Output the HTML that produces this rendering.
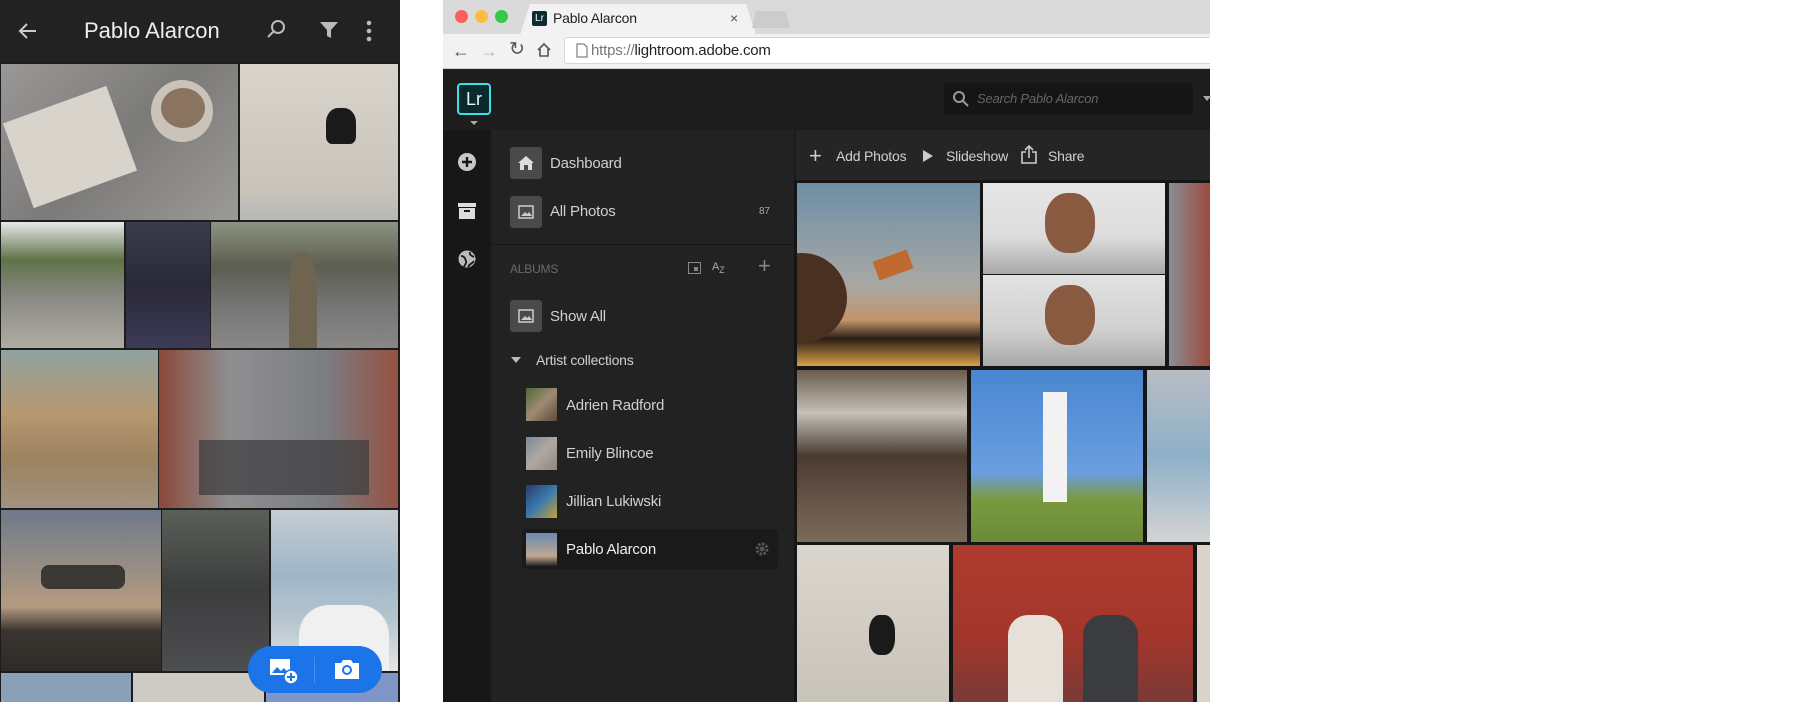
<!DOCTYPE html>
<html><head><meta charset="utf-8"><style>
*{margin:0;padding:0;box-sizing:border-box}
body{width:1800px;height:702px;background:#fff;position:relative;overflow:hidden;font-family:"Liberation Sans",sans-serif}
.a{position:absolute}
.ph{position:absolute;overflow:hidden}
.t{position:absolute;color:#d0d0d0;font-size:14px;white-space:nowrap;line-height:1;letter-spacing:-0.2px}
</style></head><body>
<!-- Phone -->
<div class="a" style="left:0;top:0;width:400px;height:702px;background:#1c1c1c"></div>
<div class="a" style="left:0;top:0;width:400px;height:62px;background:#222"></div>
<svg class="a" style="left:16px;top:19px" width="24" height="24" viewBox="0 0 24 24"><path d="M20 12H5M11 5l-7 7 7 7" stroke="#ccc" stroke-width="2" fill="none"/></svg>
<div class="t" style="left:84px;top:20px;font-size:22px;color:#eee;letter-spacing:0">Pablo Alarcon</div>
<svg class="a" style="left:264px;top:17px" width="24" height="24" viewBox="0 0 24 24"><circle cx="14" cy="10" r="6" stroke="#bbb" stroke-width="2" fill="none"/><path d="M10 14l-6 6" stroke="#bbb" stroke-width="2"/></svg>
<svg class="a" style="left:318px;top:19px" width="22" height="22" viewBox="0 0 22 22"><path d="M2 3h18l-7 8v8l-4-2v-6z" fill="#bbb"/></svg>
<svg class="a" style="left:364px;top:19px" width="10" height="24"><circle cx="5" cy="4" r="2.3" fill="#bbb"/><circle cx="5" cy="12" r="2.3" fill="#bbb"/><circle cx="5" cy="20" r="2.3" fill="#bbb"/></svg>
<div class="ph" style="left:1px;top:64px;width:237px;height:156px;background:linear-gradient(135deg,#9a9896,#7c7b79 50%,#9c9a97)">
 <div class="a" style="left:14px;top:38px;width:110px;height:90px;background:#d8d4cc;transform:rotate(-20deg)"></div>
 <div class="a" style="left:150px;top:16px;width:62px;height:62px;border-radius:50%;background:#c9c3ba"></div>
 <div class="a" style="left:160px;top:24px;width:44px;height:40px;border-radius:50%;background:#8a7460"></div>
</div>
<div class="ph" style="left:240px;top:64px;width:158px;height:156px;background:linear-gradient(180deg,#d8d4cc,#c9c4bb 80%,#b7b8b8)">
 <div class="a" style="left:86px;top:44px;width:30px;height:36px;background:#1a1a1a;border-radius:40% 40% 20% 20%"></div>
</div>
<div class="ph" style="left:1px;top:222px;width:123px;height:126px;background:linear-gradient(180deg,#e8e8e8 0,#5f7348 30%,#8a8a84 60%,#b0aca4)"></div>
<div class="ph" style="left:126px;top:222px;width:84px;height:126px;background:linear-gradient(180deg,#3a3c4a,#2a2a38 50%,#3d3a55)"></div>
<div class="ph" style="left:211px;top:222px;width:187px;height:126px;background:linear-gradient(180deg,#8d9382,#5c5e50 35%,#777 70%,#8a8886)">
 <div class="a" style="left:78px;top:30px;width:28px;height:96px;background:#6e6450;border-radius:40% 40% 0 0"></div>
</div>
<div class="ph" style="left:1px;top:350px;width:157px;height:158px;background:linear-gradient(180deg,#8fa3a0,#b79870 40%,#9c8260 70%,#a39280)"></div>
<div class="ph" style="left:159px;top:350px;width:239px;height:158px;background:linear-gradient(90deg,#8a4a3a,#8f8f92 30%,#7b7d82 70%,#955242)">
 <div class="a" style="left:40px;top:90px;width:170px;height:55px;background:#3a3a3c;opacity:.7"></div>
</div>
<div class="ph" style="left:1px;top:510px;width:160px;height:161px;background:linear-gradient(180deg,#6f7a8a,#b49b80 60%,#3a3530 75%,#2e2c28)">
 <div class="a" style="left:40px;top:55px;width:84px;height:24px;background:#222;border-radius:8px;opacity:.8"></div>
</div>
<div class="ph" style="left:162px;top:510px;width:107px;height:161px;background:linear-gradient(180deg,#5a5f58,#3c3d3e 50%,#4d4e50)"></div>
<div class="ph" style="left:271px;top:510px;width:127px;height:161px;background:linear-gradient(180deg,#c6ccd2,#9fb6c8 40%,#b7c6d0 70%,#e4e4e4)">
 <div class="a" style="left:28px;top:95px;width:90px;height:66px;background:#f0f0f0;border-radius:30px 30px 0 0"></div>
</div>
<div class="ph" style="left:1px;top:673px;width:130px;height:29px;background:#8aa0b8"></div>
<div class="ph" style="left:133px;top:673px;width:131px;height:29px;background:#cfcac3"></div>
<div class="ph" style="left:266px;top:673px;width:132px;height:29px;background:#7f95c8"></div>
<div class="a" style="left:248px;top:646px;width:134px;height:47px;border-radius:24px;background:#1b74e8"></div>
<div class="a" style="left:314px;top:657px;width:1px;height:26px;background:#4a8ff0"></div>
<svg class="a" style="left:268px;top:656px" width="32" height="30" viewBox="0 0 32 30"><rect x="2" y="3" width="20" height="16" fill="#fff"/><path d="M4 17l5-6 4 4 3-3 4 5z" fill="#1b74e8"/><circle cx="23" cy="21" r="7" fill="#fff" stroke="#1b74e8" stroke-width="1.5"/><path d="M23 17v8M19 21h8" stroke="#1b74e8" stroke-width="2"/></svg>
<svg class="a" style="left:333px;top:657px" width="28" height="24" viewBox="0 0 28 24"><path d="M2 6h6l2-3h8l2 3h6v16H2z" fill="#fff"/><circle cx="14" cy="13" r="5" fill="#1b74e8"/><circle cx="14" cy="13" r="3" fill="#fff"/></svg>

<!-- Browser -->
<div class="a" style="left:443px;top:0;width:767px;height:34px;background:#dadada"></div>
<div class="a" style="left:455px;top:10px;width:13px;height:13px;border-radius:50%;background:#fc605c"></div>
<div class="a" style="left:475px;top:10px;width:13px;height:13px;border-radius:50%;background:#fdbc40"></div>
<div class="a" style="left:495px;top:10px;width:13px;height:13px;border-radius:50%;background:#34c84a"></div>
<div class="a" style="left:520px;top:4px;width:236px;height:31px;background:#f2f2f2;clip-path:polygon(10px 0,226px 0,236px 100%,0 100%);border-radius:4px 4px 0 0"></div>
<div class="a" style="left:752px;top:11px;width:38px;height:17px;background:#ccc;clip-path:polygon(4px 0,34px 0,38px 100%,0 100%)"></div>
<div class="a" style="left:532px;top:11px;width:15px;height:15px;background:#0d2b30;border-radius:2px;color:#fff;font-size:10px;text-align:center;line-height:15px">Lr</div>
<div class="t" style="left:553px;top:11px;color:#222;font-size:14px">Pablo Alarcon</div>
<div class="t" style="left:730px;top:11px;color:#555;font-size:14px">×</div>
<div class="a" style="left:443px;top:34px;width:767px;height:35px;background:#f2f2f2;border-bottom:1px solid #ccc"></div>
<div class="t" style="left:452px;top:42px;color:#555;font-size:18px">←</div>
<div class="t" style="left:480px;top:42px;color:#bbb;font-size:18px">→</div>
<div class="t" style="left:509px;top:40px;color:#555;font-size:19px">↻</div>
<svg class="a" style="left:536px;top:42px" width="16" height="16" viewBox="0 0 16 16"><path d="M2 8l6-6 6 6M4 7v7h8V7" stroke="#555" stroke-width="1.6" fill="none"/></svg>
<div class="a" style="left:564px;top:37px;width:646px;height:27px;background:#fff;border:1px solid #d6d6d6;border-right:none;border-radius:3px 0 0 3px"></div>
<svg class="a" style="left:576px;top:43px" width="12" height="15"><path d="M1 1h7l3 3v10H1z" stroke="#666" fill="none"/></svg>
<div class="t" style="left:591px;top:43px;font-size:15px;color:#222"><span style="color:#777">https://</span>lightroom.adobe.com</div>

<div class="a" style="left:443px;top:69px;width:767px;height:633px;background:#1d1d1d"></div>
<div class="a" style="left:457px;top:83px;width:34px;height:32px;border:2px solid #3be1e4;border-radius:4px;background:#0b2a2e;color:#e8f8f8;font-size:18px;text-align:center;line-height:28px">Lr</div>
<div class="a" style="left:470px;top:121px;width:0;height:0;border-left:4px solid transparent;border-right:4px solid transparent;border-top:4px solid #aaa"></div>
<div class="a" style="left:944px;top:83px;width:249px;height:32px;background:#151515;border-radius:3px"></div>
<svg class="a" style="left:952px;top:90px" width="18" height="18"><circle cx="7" cy="7" r="5" stroke="#999" stroke-width="2" fill="none"/><path d="M11 11l5 5" stroke="#999" stroke-width="2"/></svg>
<div class="t" style="left:977px;top:92px;font-style:italic;color:#666;font-size:13px">Search Pablo Alarcon</div>
<div class="a" style="left:1203px;top:96px;width:0;height:0;border-left:4px solid transparent;border-right:4px solid transparent;border-top:5px solid #aaa"></div>

<div class="a" style="left:443px;top:130px;width:48px;height:572px;background:#171717"></div>
<svg class="a" style="left:458px;top:153px" width="18" height="18"><circle cx="9" cy="9" r="9" fill="#c8c8c8"/><path d="M9 4v10M4 9h10" stroke="#171717" stroke-width="2.4"/></svg>
<svg class="a" style="left:458px;top:202px" width="18" height="18"><rect x="0" y="1" width="18" height="4" fill="#ddd"/><rect x="1" y="6" width="16" height="11" fill="#ddd"/><rect x="6" y="8" width="6" height="2" fill="#171717"/></svg>
<svg class="a" style="left:458px;top:250px" width="18" height="18"><circle cx="9" cy="9" r="8.5" fill="#bbb"/><path d="M3 6c3 0 4 2 5 5s-2 4-2 6M12 2c-1 3 2 4 4 5M10 17c1-3 4-3 6-6" stroke="#171717" stroke-width="1.8" fill="none"/></svg>

<div class="a" style="left:491px;top:130px;width:303px;height:572px;background:#222"></div>
<div class="a" style="left:491px;top:244px;width:303px;height:1px;background:#181818"></div>
<div class="a" style="left:510px;top:147px;width:32px;height:32px;background:#4a4a4a;border-radius:3px"></div>
<svg class="a" style="left:517px;top:154px" width="18" height="18"><path d="M1 9L9 2l8 7h-2v7h-4v-5H7v5H3V9z" fill="#ddd"/></svg>
<div class="t" style="left:550px;top:156px;font-size:15px">Dashboard</div>
<div class="a" style="left:510px;top:196px;width:32px;height:32px;background:#4a4a4a;border-radius:3px"></div>
<svg class="a" style="left:518px;top:205px" width="16" height="14"><rect x="1" y="1" width="14" height="12" stroke="#ccc" stroke-width="1.5" fill="none"/><path d="M3 11l4-4 2 2 2-2 3 4z" fill="#ccc"/></svg>
<div class="t" style="left:550px;top:204px;font-size:15px">All Photos</div>
<div class="t" style="left:759px;top:207px;font-size:10px;color:#aaa">87</div>
<div class="t" style="left:510px;top:263px;font-size:12px;color:#6a6a6a">ALBUMS</div>
<svg class="a" style="left:688px;top:262px" width="13" height="12"><rect x="0.5" y="0.5" width="12" height="11" stroke="#888" fill="none"/><rect x="6" y="5" width="4" height="4" fill="#888"/></svg>
<div class="t" style="left:712px;top:262px;font-size:11px;color:#aaa">A<sub style="font-size:9px">Z</sub></div>
<div class="t" style="left:758px;top:255px;font-size:22px;color:#888">+</div>
<div class="a" style="left:510px;top:300px;width:32px;height:32px;background:#4a4a4a;border-radius:3px"></div>
<svg class="a" style="left:518px;top:309px" width="16" height="14"><rect x="1" y="1" width="14" height="12" stroke="#ccc" stroke-width="1.5" fill="none"/><path d="M3 11l4-4 2 2 2-2 3 4z" fill="#ccc"/></svg>
<div class="t" style="left:550px;top:309px;font-size:15px">Show All</div>
<div class="a" style="left:511px;top:357px;width:0;height:0;border-left:5px solid transparent;border-right:5px solid transparent;border-top:6px solid #bbb"></div>
<div class="t" style="left:536px;top:353px;font-size:14px">Artist collections</div>
<div class="a" style="left:522px;top:529px;width:256px;height:40px;background:#1a1a1a;border-radius:4px"></div>
<div class="ph" style="left:526px;top:388px;width:31px;height:33px;background:linear-gradient(135deg,#4c6a3a,#a08a70,#5a4a3c)"></div>
<div class="t" style="left:566px;top:398px;font-size:15px">Adrien Radford</div>
<div class="ph" style="left:526px;top:437px;width:31px;height:33px;background:linear-gradient(135deg,#7a8a9a,#b0a8a0,#8a8680)"></div>
<div class="t" style="left:566px;top:446px;font-size:15px">Emily Blincoe</div>
<div class="ph" style="left:526px;top:485px;width:31px;height:33px;background:linear-gradient(135deg,#2a3a6a,#3a7ab0,#c8a030)"></div>
<div class="t" style="left:566px;top:494px;font-size:15px">Jillian Lukiwski</div>
<div class="ph" style="left:526px;top:533px;width:31px;height:33px;background:linear-gradient(180deg,#6a8ab0,#c0a890 70%,#222)"></div>
<div class="t" style="left:566px;top:542px;font-size:15px;color:#eee">Pablo Alarcon</div>
<svg class="a" style="left:755px;top:542px" width="14" height="14"><circle cx="7" cy="7" r="5" stroke="#555" stroke-width="3" stroke-dasharray="2.5 1.4" fill="none"/><circle cx="7" cy="7" r="2.5" fill="#555"/></svg>

<div class="a" style="left:794px;top:130px;width:416px;height:50px;background:#252525;border-left:2px solid #1a1a1a"></div>
<div class="t" style="left:809px;top:145px;font-size:22px;color:#ccc;font-weight:300">+</div>
<div class="t" style="left:836px;top:149px;font-size:14px">Add Photos</div>
<div class="a" style="left:923px;top:150px;width:0;height:0;border-top:6px solid transparent;border-bottom:6px solid transparent;border-left:10px solid #ccc"></div>
<div class="t" style="left:946px;top:149px;font-size:14px">Slideshow</div>
<svg class="a" style="left:1020px;top:145px" width="18" height="20"><path d="M6 7H2v11h14V7h-4M9 13V2M5 5l4-4 4 4" stroke="#ccc" stroke-width="1.6" fill="none"/></svg>
<div class="t" style="left:1048px;top:149px;font-size:14px">Share</div>

<div class="a" style="left:794px;top:180px;width:416px;height:522px;background:#151515"></div>
<div class="ph" style="left:797px;top:183px;width:183px;height:183px;background:linear-gradient(180deg,#6d8ea6,#a7a8a4 55%,#c3946a 75%,#2a1e14 85%,#d9a14a)">
 <div class="a" style="left:-40px;top:70px;width:90px;height:90px;border-radius:50%;background:#4a3020"></div>
 <div class="a" style="left:78px;top:72px;width:36px;height:20px;background:#c06a30;transform:rotate(-20deg)"></div>
</div>
<div class="ph" style="left:983px;top:183px;width:182px;height:91px;background:linear-gradient(180deg,#e6e6e6,#dcdcdc 60%,#a8a8a8)">
 <div class="a" style="left:62px;top:10px;width:50px;height:60px;border-radius:45%;background:#8a5a40"></div>
</div>
<div class="ph" style="left:983px;top:275px;width:182px;height:91px;background:linear-gradient(180deg,#e2e2e2,#d0d0d0 60%,#a8a8a8)">
 <div class="a" style="left:62px;top:10px;width:50px;height:60px;border-radius:45%;background:#8a5a40"></div>
</div>
<div class="ph" style="left:1169px;top:183px;width:41px;height:183px;background:linear-gradient(90deg,#8a8e94,#9c4a3e)"></div>
<div class="ph" style="left:797px;top:370px;width:170px;height:172px;background:linear-gradient(180deg,#6a5c4e,#c5c0b8 25%,#4a3a30 50%,#6a5a4c 80%,#7a6a5a)"></div>
<div class="ph" style="left:971px;top:370px;width:172px;height:172px;background:linear-gradient(180deg,#4a86d0,#6a9ee0 60%,#7a9a40 75%,#6a8a3a)">
 <div class="a" style="left:72px;top:22px;width:24px;height:110px;background:#f2f2f2"></div>
</div>
<div class="ph" style="left:1147px;top:370px;width:63px;height:172px;background:linear-gradient(180deg,#b8bcc4,#8eb0c8 50%,#d4d4d4)"></div>
<div class="ph" style="left:797px;top:545px;width:152px;height:157px;background:linear-gradient(180deg,#dad6ce,#c8c4ba)">
 <div class="a" style="left:72px;top:70px;width:26px;height:40px;background:#1a1a1a;border-radius:40%"></div>
</div>
<div class="ph" style="left:953px;top:545px;width:240px;height:157px;background:linear-gradient(180deg,#b03a2e,#a2362c 60%,#7a3a36)">
 <div class="a" style="left:55px;top:70px;width:55px;height:87px;background:#e6e0d8;border-radius:20px 20px 0 0"></div>
 <div class="a" style="left:130px;top:70px;width:55px;height:87px;background:#3a3c40;border-radius:20px 20px 0 0"></div>
</div>
<div class="ph" style="left:1197px;top:545px;width:13px;height:157px;background:#d8d4c8"></div>
</body></html>
